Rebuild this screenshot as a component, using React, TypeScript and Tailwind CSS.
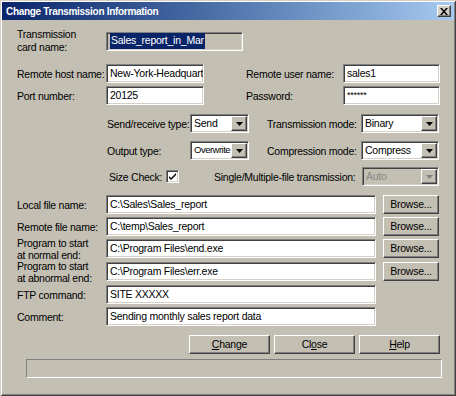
import { ReactNode } from 'react';

const FONT = "font-['Liberation_Sans',Arial,sans-serif]";
const SUNKEN =
  'border border-t-[#808080] border-l-[#808080] border-b-white border-r-white shadow-[inset_1px_1px_0_#404040,inset_-1px_-1px_0_#d4d0c8]';
const RAISED =
  'border border-t-white border-l-white border-b-[#404040] border-r-[#404040] shadow-[inset_-1px_-1px_0_#808080]';

const Field = ({ value, width, className = '' }: { value: string; width: string; className?: string }) => (
  <div className={`${SUNKEN} ${width} h-[19px] bg-white flex items-center px-[3px] overflow-hidden whitespace-nowrap ${className}`}>
    {value}
  </div>
);

const Arrow = ({ disabled }: { disabled?: boolean }) => (
  <div className={`${RAISED} w-[16px] h-[15px] bg-[#c3bfb3] flex items-center justify-center shrink-0`}>
    <svg width="7" height="4" viewBox="0 0 7 4">
      <path d="M0 0h7L3.5 4z" fill={disabled ? '#808080' : '#000'} />
    </svg>
  </div>
);

const Select = ({
  value,
  width,
  disabled,
  textClass = '',
}: {
  value: string;
  width: string;
  disabled?: boolean;
  textClass?: string;
}) => (
  <div
    className={`${SUNKEN} ${width} h-[19px] ${disabled ? 'bg-[#c3bfb3] text-[#8a877f]' : 'bg-white'} flex items-center pl-[2px] pr-[1px] overflow-hidden whitespace-nowrap`}
  >
    <span className={`flex-1 overflow-hidden pl-[1px] ${textClass}`}>{value}</span>
    <Arrow disabled={disabled} />
  </div>
);

const Button = ({ children, width }: { children: ReactNode; width: string }) => (
  <div className={`${RAISED} ${width} h-[19px] flex items-center justify-center`}>{children}</div>
);

const Label = ({ children, width }: { children: ReactNode; width: string }) => (
  <div className={`${width} leading-[12px] shrink-0 whitespace-nowrap`}>{children}</div>
);

const FileRow = ({ label, value, browse, mt }: { label: ReactNode; value: string; browse?: boolean; mt: string }) => (
  <div className={`flex items-center h-[19px] pl-[17px] ${mt}`}>
    <Label width="w-[89px]">{label}</Label>
    <Field value={value} width="w-[270px]" />
    {browse && (
      <div className="ml-[7px]">
        <Button width="w-[56px]">Browse...</Button>
      </div>
    )}
  </div>
);

export default function App() {
  return (
    <div
      className={`${FONT} text-[10.5px] tracking-[-0.25px] text-black w-[456px] h-[396px] bg-[#c3bfb3] flex flex-col shadow-[inset_1px_1px_0_#d4d0c8,inset_-1px_-1px_0_#404040,inset_2px_2px_0_#ffffff,inset_-2px_-2px_0_#808080]`}
    >
      {/* title bar */}
      <div className="mx-[2px] mt-[2px] h-[18px] bg-gradient-to-r from-[#0a246a] to-[#a6caf0] flex items-center justify-between pl-[4px] pr-[3px]">
        <span className="text-white font-bold text-[10px] tracking-[-0.3px]">Change Transmission Information</span>
        <div className={`${RAISED} w-[14px] h-[12px] bg-[#d4d0c8] flex items-center justify-center`}>
          <svg width="8" height="7" viewBox="0 0 8 7">
            <path d="M0 0h2l2 2.5L6 0h2L5 3.5 8 7H6L4 4.5 2 7H0l3-3.5z" fill="#000" />
          </svg>
        </div>
      </div>

      {/* card name */}
      <div className="flex items-center h-[26px] mt-[8px] pl-[17px]">
        <div className="w-[89px] leading-[13px] shrink-0 whitespace-nowrap">
          Transmission
          <br />
          card name:
        </div>
        <div className={`${SUNKEN} w-[137px] h-[19px] bg-[#c3bfb3] flex items-center px-[3px]`}>
          <span className="bg-[#0a246a] text-white px-[1px]">Sales_report_in_Mar</span>
        </div>
      </div>

      {/* host / user */}
      <div className="flex items-center h-[19px] mt-[10px] pl-[17px]">
        <Label width="w-[89px]">Remote host name:</Label>
        <Field value="New-York-Headquarters" width="w-[98px]" />
        <div className="w-[42px]" />
        <Label width="w-[97px]">Remote user name:</Label>
        <Field value="sales1" width="w-[97px]" />
      </div>

      <div className="flex items-center h-[19px] mt-[3px] pl-[17px]">
        <Label width="w-[89px]">Port number:</Label>
        <Field value="20125" width="w-[98px]" />
        <div className="w-[42px]" />
        <Label width="w-[97px]">Password:</Label>
        <Field value="******" width="w-[97px]" className="text-[9px]" />
      </div>

      <div className="flex items-center h-[19px] mt-[9px] pl-[107px]">
        <Label width="w-[83px]">Send/receive type:</Label>
        <Select value="Send" width="w-[59px]" />
        <div className="w-[18px]" />
        <Label width="w-[94px]">Transmission mode:</Label>
        <Select value="Binary" width="w-[78px]" />
      </div>

      <div className="flex items-center h-[19px] mt-[8px] pl-[107px]">
        <Label width="w-[83px]">Output type:</Label>
        <Select value="Overwrite" width="w-[59px]" textClass="text-[9.5px] tracking-[-0.5px]" />
        <div className="w-[18px]" />
        <Label width="w-[94px]">Compression mode:</Label>
        <Select value="Compress" width="w-[78px]" />
      </div>

      <div className="flex items-center h-[19px] mt-[7px] pl-[109px]">
        <Label width="w-[57px]">Size Check:</Label>
        <div className={`${SUNKEN} w-[13px] h-[13px] bg-white flex items-center justify-center shrink-0`}>
          <svg width="7" height="7" viewBox="0 0 7 7">
            <path d="M0 2l2 2 5-5v2L2 6 0 4z" fill="#000" transform="translate(0 1)" />
          </svg>
        </div>
        <div className="w-[35px]" />
        <Label width="w-[148px]">Single/Multiple-file transmission:</Label>
        <Select value="Auto" width="w-[77px]" disabled />
      </div>

      <FileRow label="Local file name:" value="C:\Sales\Sales_report" browse mt="mt-[9px]" />
      <FileRow label="Remote file name:" value="C:\temp\Sales_report" browse mt="mt-[3px]" />
      <FileRow
        label={
          <>
            Program to start
            <br />
            at normal end:
          </>
        }
        value="C:\Program Files\end.exe"
        browse
        mt="mt-[3px]"
      />
      <FileRow
        label={
          <>
            Program to start
            <br />
            at abnormal end:
          </>
        }
        value="C:\Program Files\err.exe"
        browse
        mt="mt-[4px]"
      />
      <FileRow label="FTP command:" value="SITE XXXXX" mt="mt-[4px]" />
      <FileRow label="Comment:" value="Sending monthly sales report data" mt="mt-[3px]" />

      {/* buttons */}
      <div className="flex items-center h-[19px] mt-[9px] pl-[189px] gap-[4px]">
        <Button width="w-[81px]">
          <span>
            <u>C</u>hange
          </span>
        </Button>
        <Button width="w-[81px]">
          <span>
            Cl<u>o</u>se
          </span>
        </Button>
        <Button width="w-[81px]">
          <span>
            <u>H</u>elp
          </span>
        </Button>
      </div>

      {/* status bar */}
      <div className="mt-[5px] ml-[26px] w-[416px] h-[19px] border border-t-[#808080] border-l-[#808080] border-b-white border-r-white" />
    </div>
  );
}
